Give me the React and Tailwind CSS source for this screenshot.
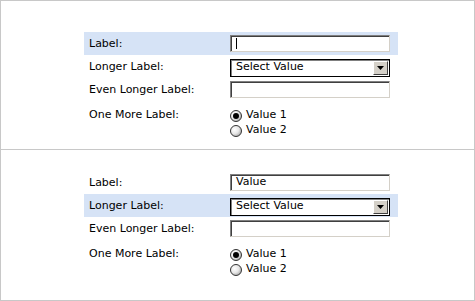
const FONT = { fontFamily: '"DejaVu Sans", Verdana, sans-serif' };

function TextInput({ value, caret }) {
  return (
    <div className="flex h-[17px] w-[160px] items-center border border-t-[#808080] border-l-[#808080] border-r-[#d4d0c8] border-b-[#d4d0c8] bg-white pl-[5px] shadow-[inset_1px_1px_0_#404040] text-[11px] text-black">
      {caret && <span className="h-[11px] w-px bg-black" />}
      {value}
    </div>
  );
}

function SelectBox() {
  return (
    <div className="mt-[2px] flex h-[18px] w-[160px] items-center border border-black bg-white shadow-[inset_1px_1px_0_#808080]">
      <span className="flex-1 pl-[5px] text-[11px] text-black">Select Value</span>
      <span className="mr-[1px] flex h-[14px] w-[15px] items-center justify-center border border-t-white border-l-white border-r-[#404040] border-b-[#404040] bg-[#d4d0c8]">
        <svg width="7" height="4" viewBox="0 0 7 4">
          <path d="M0 0h7L3.5 4z" fill="#000" />
        </svg>
      </span>
    </div>
  );
}

function Radio({ checked, label }) {
  return (
    <div className="flex h-[15px] items-center gap-[4px] text-[11px] text-black">
      <span className="flex h-[12px] w-[12px] items-center justify-center rounded-full border border-[#333] bg-[radial-gradient(circle_at_35%_35%,#ffffff_0%,#e8e8e8_45%,#8c8c8c_100%)]">
        {checked && <span className="h-[6px] w-[6px] rounded-full bg-black" />}
      </span>
      {label}
    </div>
  );
}

function Row({ label, highlight, children }) {
  return (
    <div className={`flex h-[23px] items-center ${highlight ? 'bg-[#d6e3f6]' : ''}`}>
      <span className="mt-[2px] w-[146px] pl-[5px] text-[11px] text-black">{label}</span>
      {children}
    </div>
  );
}

function Form({ active, inputValue }) {
  return (
    <div className="ml-[83px] w-[314px]">
      <Row label="Label:" highlight={active === 0}>
        <TextInput value={inputValue} caret={!inputValue} />
      </Row>
      <Row label="Longer Label:" highlight={active === 1}>
        <SelectBox />
      </Row>
      <Row label="Even Longer Label:">
        <TextInput />
      </Row>
      <div className="flex pt-[7px]">
        <span className="flex h-[15px] w-[146px] items-center pl-[5px] text-[11px] text-black">One More Label:</span>
        <div className="flex flex-col">
          <Radio checked label="Value 1" />
          <Radio label="Value 2" />
        </div>
      </div>
    </div>
  );
}

export default function App() {
  return (
    <div className="h-[301px] w-[475px] border border-[#c8c8c8] bg-white" style={FONT}>
      <div className="h-[149px] border-b border-[#c8c8c8] pt-[31px]">
        <Form active={0} />
      </div>
      <div className="pt-[21px]">
        <Form active={1} inputValue="Value" />
      </div>
    </div>
  );
}
